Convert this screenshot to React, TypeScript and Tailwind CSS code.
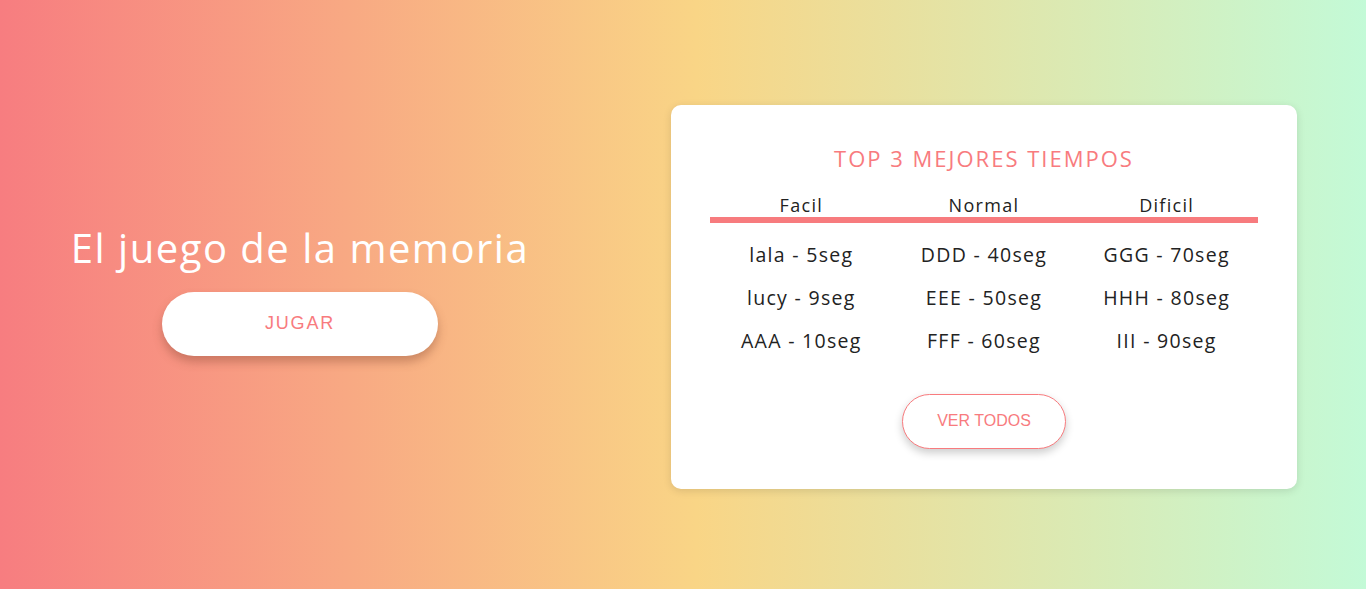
import React from "react";

const font = { fontFamily: '"Open Sans", "Noto Sans", sans-serif' };

const rows = [
  ["lala - 5seg", "DDD - 40seg", "GGG - 70seg"],
  ["lucy - 9seg", "EEE - 50seg", "HHH - 80seg"],
  ["AAA - 10seg", "FFF - 60seg", "III - 90seg"],
];

export default function App() {
  return (
    <div
      className="w-[1366px] h-[589px] flex items-center bg-[linear-gradient(to_right,#f77d80,#f9d586_51%,#c3fad7)]"
      style={font}
    >
      <div className="w-[600px] flex flex-col items-center pb-[10px]">
        <h1 className="text-[40px] leading-[48px] text-white font-medium tracking-[1.5px]">
          El juego de la memoria
        </h1>
        <button className="mt-[20px] w-[276px] h-[64px] rounded-full bg-white text-[#f87b7e] text-[18px] tracking-[1.8px] shadow-[0_6px_10px_rgba(120,60,40,0.35)] font-['Liberation_Sans',Arial,sans-serif]">
          JUGAR
        </button>
      </div>
      <div className="ml-[71px] mt-[4px] w-[626px] h-[384px] bg-white rounded-[10px] shadow-[0_2px_8px_rgba(0,0,0,0.12)] px-[39px] pt-[38px] flex flex-col items-center">
        <h2 className="text-[22px] leading-[30px] text-[#f87b7e] font-medium tracking-[2px]">TOP 3 MEJORES TIEMPOS</h2>
        <div className="w-full mt-[20px] grid grid-cols-3 border-b-[6px] border-[#f77b7e] text-[#222] text-[18px] leading-[24px] tracking-[1.3px]">
          <div className="text-center">Facil</div>
          <div className="text-center">Normal</div>
          <div className="text-center">Dificil</div>
        </div>
        <div className="w-full mt-[19px] grid grid-cols-3 gap-y-[17px] text-[#222] text-[19.5px] leading-[26px] tracking-[1.3px]">
          {rows.flat().map((t, i) => (
            <div key={i} className="text-center">
              {t}
            </div>
          ))}
        </div>
        <button className="mt-[40px] w-[164px] h-[55px] rounded-full bg-white border border-[#f87b7e] text-[#f87b7e] text-[16px] shadow-[0_4px_8px_rgba(0,0,0,0.2)] font-['Liberation_Sans',Arial,sans-serif]">
          VER TODOS
        </button>
      </div>
    </div>
  );
}
